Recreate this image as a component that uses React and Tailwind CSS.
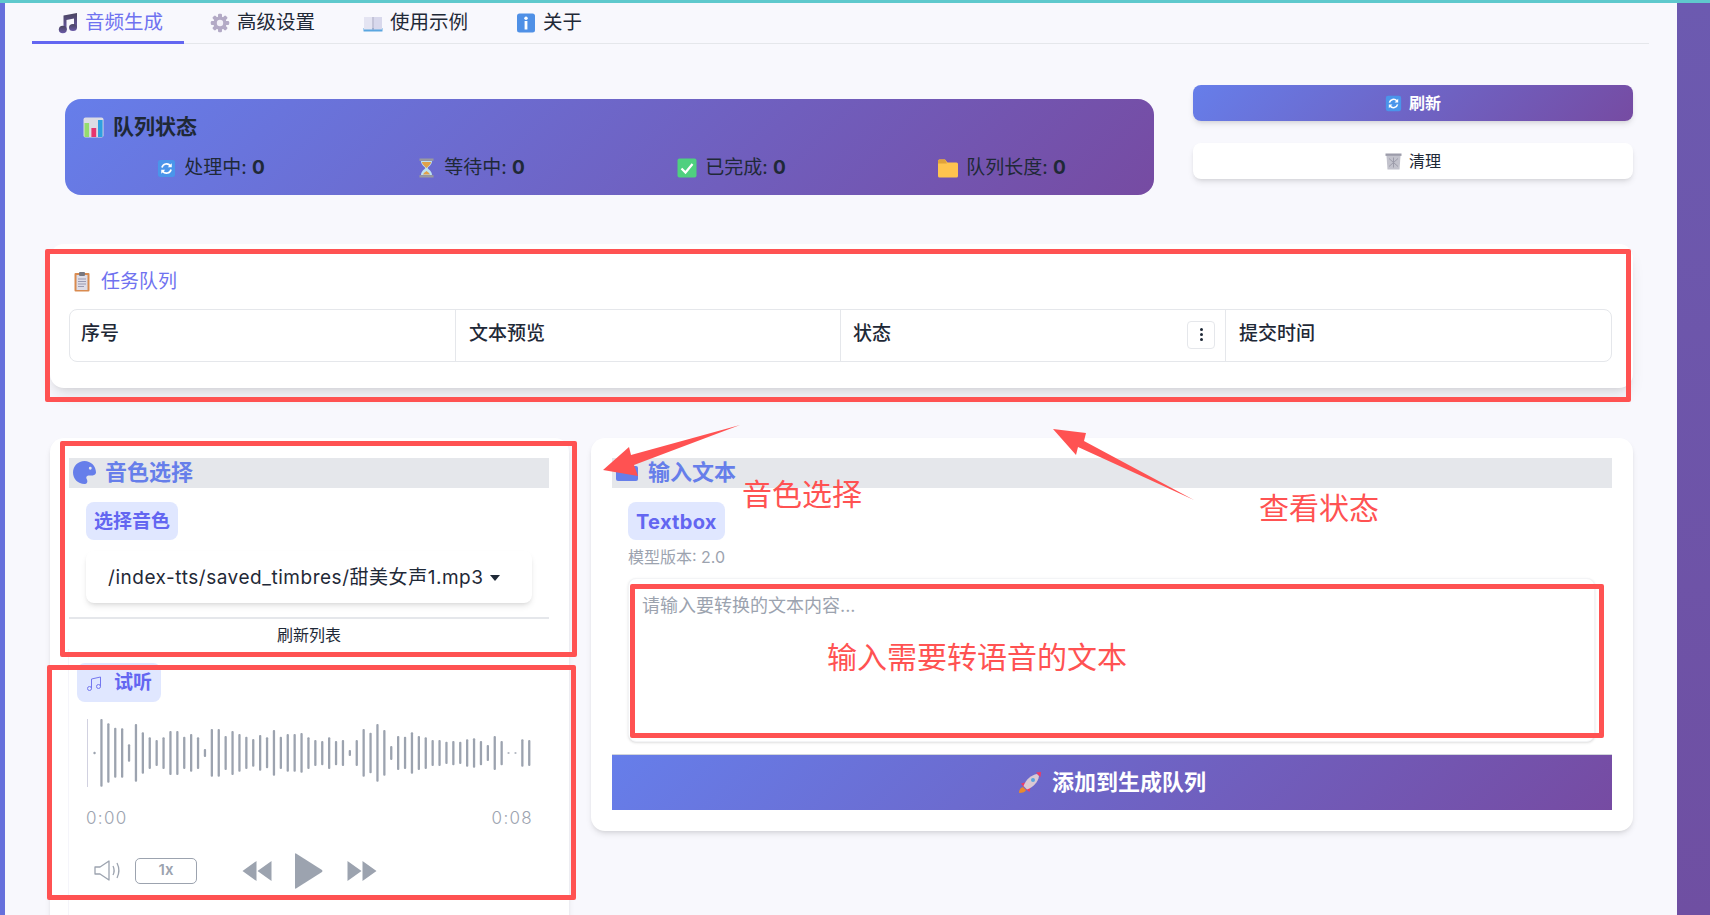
import React from "react"

const sans = "font-['Inter','Noto_Sans_CJK_SC',sans-serif]"

const wave = [
  [275,283],[177,380],[190,368],[203,353],[205,353],[253,305],[192,365],[217,341],[232,327],[240,318],[232,327],
  [213,345],[213,345],[230,327],[222,335],[232,327],[267,291],[207,350],[207,350],[228,330],[213,345],[222,335],
  [230,327],[237,320],[225,332],[232,325],[210,347],[230,327],[222,335],[222,335],[219,338],[232,327],[240,318],
  [243,316],[232,327],[243,316],[240,318],[270,288],[240,318],[207,350],[218,340],[192,365],[210,347],[258,300],
  [228,330],[230,327],[217,341],[228,330],[232,327],[240,318],[240,318],[245,312],[243,316],[245,312],[238,320],
  [235,323],[243,316],[255,303],[228,330],[243,316],[277,281],[277,281],[238,320],[240,318],
]

function NoteIcon() {
  return (
    <svg width="20" height="22" viewBox="0 0 20 22">
      <defs>
        <linearGradient id="noteg" x1="0" y1="0" x2="0" y2="1">
          <stop offset="0" stopColor="#4a4560" />
          <stop offset="1" stopColor="#6a5aa8" />
        </linearGradient>
      </defs>
      <path d="M5.500 3.500 19 1v15h-3V6.500L8.500 8v10h-3z" fill="url(#noteg)" />
      <ellipse cx="4.800" cy="17.500" rx="4" ry="3.800" fill="url(#noteg)" />
      <ellipse cx="15" cy="15.500" rx="4" ry="3.600" fill="url(#noteg)" />
    </svg>
  )
}

function GearIcon() {
  return (
    <svg width="20" height="20" viewBox="0 0 20 20">
      <g fill="#b3aac6">
        <circle cx="10" cy="10" r="6.600" />
        <rect x="8" y="0.800" width="4" height="18.400" rx="1.200" />
        <rect x="8" y="0.800" width="4" height="18.400" rx="1.200" transform="rotate(45 10 10)" />
        <rect x="8" y="0.800" width="4" height="18.400" rx="1.200" transform="rotate(90 10 10)" />
        <rect x="8" y="0.800" width="4" height="18.400" rx="1.200" transform="rotate(135 10 10)" />
      </g>
      <circle cx="10" cy="10" r="3.200" fill="#f2f0f8" />
    </svg>
  )
}

function BookIcon() {
  return (
    <svg width="20" height="20" viewBox="0 0 20 20">
      <rect x="0.500" y="15" width="19" height="3.500" rx="0.600" fill="#5aa6e0" />
      <path d="M1 4h8.400v12.500H1z" fill="#e4e4f2" />
      <path d="M10.600 4H19v12.500h-8.400z" fill="#d8d8ec" />
      <rect x="9.400" y="4" width="1.200" height="13" fill="#a9a9c4" />
    </svg>
  )
}

function InfoIcon() {
  return (
    <svg width="20" height="20" viewBox="0 0 20 20">
      <rect x="1" y="0.500" width="18" height="19" rx="2.500" fill="#4f90e6" />
      <circle cx="10" cy="5.200" r="1.700" fill="#fff" />
      <rect x="8.600" y="8" width="2.800" height="8.500" fill="#fff" />
    </svg>
  )
}

function ChartIcon() {
  return (
    <svg width="21" height="21" viewBox="0 0 21 21">
      <rect x="0.500" y="0.500" width="20" height="20" rx="2" fill="#dcdce4" />
      <rect x="1.500" y="6" width="4.600" height="14" fill="#94dc6e" />
      <rect x="8.400" y="11" width="4.800" height="9" fill="#e6356f" />
      <rect x="15" y="3" width="4.600" height="17" fill="#2f9fe0" />
    </svg>
  )
}

function RefreshIcon({ w = 19, h = 19 }) {
  return (
    <svg width={w} height={h} viewBox="0 0 20 20">
      <rect x="1" y="1" width="18" height="18" rx="2.500" fill="#4a95ea" />
      <path d="M5.200 9A5 5 0 0 1 14 7" fill="none" stroke="#fff" strokeWidth="1.800" />
      <path d="M15.500 4.500v4.200h-4.200z" fill="#fff" />
      <path d="M14.800 11A5 5 0 0 1 6 13" fill="none" stroke="#fff" strokeWidth="1.800" />
      <path d="M4.500 15.500v-4.200h4.200z" fill="#fff" />
    </svg>
  )
}

function HourglassIcon() {
  return (
    <svg width="19" height="20" viewBox="0 0 19 20">
      <rect x="2.500" y="0.500" width="14" height="2.400" fill="#9a9a9e" />
      <rect x="2.500" y="17.100" width="14" height="2.400" fill="#9a9a9e" />
      <path d="M4 3h11c0 4-3.600 5.400-4.400 7 .8 1.600 4.400 3 4.400 7H4c0-4 3.600-5.400 4.400-7C7.600 8.400 4 7 4 3z" fill="#bde2f2" />
      <path d="M4.800 4h9.400c-.5 3-3.600 4.600-4.700 6C8.400 8.600 5.300 7 4.800 4z" fill="#e0a14a" />
      <path d="M6 16.600c.5-1.800 2.400-2.600 3.500-3.600 1.100 1 3 1.800 3.500 3.600z" fill="#e0a14a" />
    </svg>
  )
}

function CheckIcon() {
  return (
    <svg width="20" height="20" viewBox="0 0 20 20">
      <rect x="0.500" y="0.500" width="19" height="19" rx="2" fill="#4fd07f" />
      <path d="M4.500 10.500 8.500 14.500 15.500 6" fill="none" stroke="#fff" strokeWidth="2.200" />
    </svg>
  )
}

function FolderIcon() {
  return (
    <svg width="20" height="19" viewBox="0 0 20 19">
      <path d="M0 2a1.500 1.500 0 0 1 1.500-1.500H7L9.500 3.500h9A1.500 1.500 0 0 1 20 5v12a1.500 1.500 0 0 1-1.500 1.500h-17A1.500 1.500 0 0 1 0 17z" fill="#ffc44f" />
      <path d="M0 2a1.500 1.500 0 0 1 1.500-1.500H7L9 4.500H0z" fill="#e0a23a" />
    </svg>
  )
}

function TrashIcon() {
  return (
    <svg width="17" height="17" viewBox="0 0 17 17">
      <rect x="0.500" y="0.500" width="16" height="2.400" fill="#9c9caa" />
      <path d="M1.500 3h14l-1 13.500h-12z" fill="#c2c2cc" />
      <path d="M4 5.500l9 8M13 5.500l-9 8M8.500 4.500v10" stroke="#9c9caa" strokeWidth="1" />
    </svg>
  )
}

function ClipboardIcon() {
  return (
    <svg width="16" height="20" viewBox="0 0 16 20">
      <rect x="0.500" y="1" width="15" height="18.500" rx="1" fill="#d98b50" />
      <rect x="2.500" y="3" width="11" height="15" fill="#dedde8" />
      <rect x="5" y="0" width="6" height="4" rx="1" fill="#77777f" />
      <path d="M4 7h8M4 9.500h8M4 12h8M4 14.500h6" stroke="#9a9ab2" strokeWidth="1" />
    </svg>
  )
}

function RocketIcon() {
  return (
    <svg width="24" height="24" viewBox="0 0 24 24">
      <path d="M1 22c0-3 1.500-5.500 4-6l3 3c-.5 2-3 3-7 3z" fill="#e98a2c" />
      <path d="M3 12.500l4-1-1 5zM11.500 21l1-4.500-5 1.500z" fill="#f03a62" />
      <path d="M5.500 15C8 8.500 13 4 19 3l2 2c-.8 6-5.500 11-12 13.500z" fill="#d9c9d4" />
      <path d="M18 1.500 23 1l-.5 5z" fill="#f03a62" />
      <circle cx="15" cy="9" r="2" fill="#5aa6e0" />
    </svg>
  )
}

function PaletteIcon() {
  return (
    <svg width="23" height="23" viewBox="0 0 512 512">
      <path
        fill="#667eea"
        d="M512 256c0 .9 0 1.800 0 2.700-.4 36.500-33.600 61.300-70.100 61.300H344c-26.500 0-48 21.500-48 48 0 3.400.4 6.700 1 9.900 2.100 10.200 6.500 20 10.800 29.900 6.100 13.800 12.100 27.500 12.100 42 0 31.800-21.600 60.700-53.400 62-3.500.1-7 .2-10.600.2C114.600 512 0 397.400 0 256S114.600 0 256 0s256 114.600 256 256zm-128-64a32 32 0 1 0 0-64 32 32 0 1 0 0 64z"
      />
    </svg>
  )
}

function Tab({ icon, label, active, className }) {
  return (
    <div
      className={`flex items-center gap-[7px] h-[41px] pt-[2px] border-b-[3px] ${active ? "border-[#6366f1] text-[#6f72f0]" : "border-transparent text-[#1f2937]"} ${className}`}
    >
      {icon}
      <span className="text-[19.500px]">{label}</span>
    </div>
  )
}

function Stat({ icon, label }) {
  return (
    <div className="flex items-center gap-[8px] text-[19px] text-[#1f2937]">
      {icon}
      <span>
        {label}: <b className="font-bold">0</b>
      </span>
    </div>
  )
}

function Chip({ children, className }) {
  return (
    <div className={`inline-flex items-center rounded-lg bg-[#e0e7ff] h-[38px] pt-[2px] text-[#6366f1] font-bold ${className}`}>
      {children}
    </div>
  )
}

function SectionHead({ icon, label, className }) {
  return (
    <div className={`flex items-center h-[30px] pb-[2px] bg-[#e5e7eb] text-[22px] font-bold text-[#667eea] ${className}`}>
      {icon}
      <span>{label}</span>
    </div>
  )
}

function Th({ label, children, className }) {
  return (
    <div className={`flex items-center justify-between pb-[2px] border-[#e5e7eb] text-[19px] font-medium text-[#1f2937] ${className}`}>
      <span>{label}</span>
      {children}
    </div>
  )
}

export default function App() {
  return (
    <div className={`relative w-[1710px] h-[915px] overflow-hidden bg-[#f8f8fd] ${sans}`}>
      <div className="h-[3px] bg-[#5fc9cd]" />
      <div className="flex h-[912px]">
        <div className="w-[5px] bg-[#6670dc]" />

        <div className="w-[1672px] shrink-0">
          {/* tabs */}
          <div className="ml-[27px] w-[1617px] flex border-b border-[#e5e7eb] h-[41px]">
            <Tab icon={<NoteIcon />} label="音频生成" active className="pl-[26px] pr-[21px]" />
            <Tab icon={<GearIcon />} label="高级设置" className="ml-[2px] px-[24px]" />
            <Tab icon={<BookIcon />} label="使用示例" className="px-[24px]" />
            <Tab icon={<InfoIcon />} label="关于" className="px-[24px]" />
          </div>

          <div className="pl-[45px] w-[1628px]">
            {/* status row */}
            <div className="flex items-start pl-[15px] pt-[41px]">
              <div className="mt-[14px] w-[1089px] h-[96px] rounded-2xl bg-[linear-gradient(135deg,#667eea,#764ba2)] pt-[17px] pl-[16px] pr-[12px]">
                <div className="flex items-center gap-[9px] h-[22px] pl-[2px] text-[21px] font-bold text-[#1f2937]">
                  <ChartIcon />
                  <span>队列状态</span>
                </div>
                <div className="flex justify-around mt-[16px]">
                  <Stat icon={<RefreshIcon />} label="处理中" />
                  <Stat icon={<HourglassIcon />} label="等待中" />
                  <Stat icon={<CheckIcon />} label="已完成" />
                  <Stat icon={<FolderIcon />} label="队列长度" />
                </div>
              </div>
              <div className="ml-[39px] w-[440px] flex flex-col gap-[22px]">
                <div className="flex items-center justify-center gap-[7px] h-[36px] rounded-lg bg-[linear-gradient(135deg,#667eea,#764ba2)] text-[16px] font-bold text-white shadow-md">
                  <RefreshIcon w={17} h={17} />
                  刷新
                </div>
                <div className="flex items-center justify-center gap-[7px] h-[36px] rounded-lg bg-white text-[16px] text-[#1f2937] shadow-md">
                  <TrashIcon />
                  清理
                </div>
              </div>
            </div>

            {/* task queue */}
            <div className="mt-[49px] w-[1583px] h-[144px] rounded-[14px] bg-white shadow-lg pt-[25px] px-[20px]">
              <div className="flex items-center gap-[11px] h-[26px] pl-[4px] text-[19px] text-[#6f72f0]">
                <ClipboardIcon />
                <span>任务队列</span>
              </div>
              <div className="mt-[14px] -ml-[1px] w-[1543px] h-[53px] grid grid-cols-[386px_385px_385px_385px] rounded-lg border border-[#e5e7eb]">
                <Th label="序号" className="pl-[11px] border-r" />
                <Th label="文本预览" className="pl-[13px] border-r" />
                <Th label="状态" className="pl-[12px] pr-[10px] border-r">
                  <div className="flex flex-col items-center justify-center gap-[2px] w-[28px] h-[28px] rounded border border-[#e5e7eb]">
                    <i className="w-[3px] h-[3px] rounded-full bg-[#1f2937]" />
                    <i className="w-[3px] h-[3px] rounded-full bg-[#1f2937]" />
                    <i className="w-[3px] h-[3px] rounded-full bg-[#1f2937]" />
                  </div>
                </Th>
                <Th label="提交时间" className="pl-[13px]" />
              </div>
            </div>

            {/* two columns */}
            <div className="flex mt-[50px] gap-[22px]">
              <div className="w-[519px] h-[500px] shrink-0 rounded-t-[14px] bg-white shadow-md pt-[20px] pl-[19px] pr-[20px]">
                <SectionHead icon={<PaletteIcon />} label="音色选择" className="pl-[4px] gap-[9px]" />
                <Chip className="mt-[14px] ml-[17px] px-[8px] text-[19px]">选择音色</Chip>
                <div className="mt-[11px] ml-[17px] w-[446px] h-[52px] flex items-center rounded-lg bg-white shadow-md pl-[22px] pt-[2px] text-[19px] tracking-[0.530px] text-[#1f2937]">
                  <span>/index-tts/saved_timbres/甜美女声1.mp3</span>
                  <svg className="ml-[6px]" width="10" height="6" viewBox="0 0 10 6">
                    <path d="M0 0h10L5 6z" fill="#1f2937" />
                  </svg>
                </div>
                <div className="mt-[14px] border-t-2 border-[#e5e7eb] h-[34px] flex items-center justify-center text-[16px] text-[#1f2937]">
                  刷新列表
                </div>

                <div className="-ml-[1px] w-[469px] h-[280px] border-l border-[#f5f5fa] -mt-[2px] pt-[14px] pl-[8px]">
                  <Chip className="px-[9px] gap-[12px] text-[19px] h-[39px]">
                    <svg width="16" height="16" viewBox="0 0 16 16" fill="none" stroke="#7477f0" strokeWidth="1">
                      <path d="M5.500 12.500V3l9-2v9.500" />
                      <circle cx="3.500" cy="12.500" r="2" />
                      <circle cx="12.500" cy="10.500" r="2" />
                    </svg>
                    试听
                  </Chip>
                  <svg className="mt-[17px] ml-[10px] block" width="446" height="68" viewBox="0 0 446 68">
                    <rect x="0" y="0" width="1" height="68" fill="#d1d1e0" />
                    {wave.map((b, i) => {
                      const top = (b[0] - 177) / 3
                      const h = (b[1] - b[0]) / 3
                      return <rect key={i} x={6.400 + i * 6.900} y={top} width="2.300" height={h} rx="1" fill="#9ca3af" />
                    })}
                  </svg>
                  <div className="mt-[19px] ml-[9px] w-[447px] flex justify-between text-[17px] tracking-[1.300px] font-light text-[#9ca3af]">
                    <span>0:00</span>
                    <span>0:08</span>
                  </div>
                  <div className="mt-[21px] ml-[17px] flex items-center">
                    <svg width="28" height="21" viewBox="0 0 28 21" fill="none" stroke="#9ca3af" strokeWidth="1.300">
                      <path d="M1 7h5l9-6v19l-9-6H1z" strokeLinejoin="round" />
                      <path d="M19 6c1.500 3 1.500 6 0 9M23 3c2.500 5 2.500 10 0 15" />
                    </svg>
                    <div className="ml-[13px] flex items-center justify-center w-[62px] h-[26px] rounded-[5px] border border-[#9ca3af] text-[15px] font-semibold text-[#9ca3af]">
                      1x
                    </div>
                    <svg className="ml-[45px]" width="30" height="20" viewBox="0 0 29 20" fill="#9ca3af">
                      <path d="M0 10 14 0v20zM15 10 29 0v20z" />
                    </svg>
                    <svg className="ml-[23px]" width="28" height="36" viewBox="0 0 28 36" fill="#9ca3af">
                      <path d="M0 1q0-1 1-.500L27 17q1 1 0 2L1 35.500q-1 .500-1-.500z" />
                    </svg>
                    <svg className="ml-[24px]" width="30" height="20" viewBox="0 0 29 20" fill="#9ca3af">
                      <path d="M0 0l14 10L0 20zM15 0l14 10-14 10z" />
                    </svg>
                  </div>
                </div>
              </div>

              <div className="w-[1042px] h-[393px] rounded-[14px] bg-white shadow-md pt-[20px] px-[21px]">
                <SectionHead
                  icon={
                    <svg width="22" height="18" viewBox="0 0 22 18">
                      <rect y="3" width="22" height="15" rx="2" fill="#667eea" />
                    </svg>
                  }
                  label="输入文本"
                  className="pl-[4px] gap-[10px]"
                />
                <Chip className="mt-[14px] ml-[16px] px-[8px] text-[20px] tracking-[0.300px]">Textbox</Chip>
                <div className="ml-[16px] mt-[8px] h-[18px] flex items-center text-[16px] text-[#9ca3af]">模型版本: 2.0</div>
                <div className="mt-[12px] ml-[16px] w-[967px] h-[164px] rounded-lg bg-white shadow-sm border border-[#f3f4f6] pl-[13px] pt-[15px]">
                  <textarea
                    rows="3"
                    placeholder="请输入要转换的文本内容..."
                    className="block w-full resize-none outline-none text-[18px] leading-[24px] placeholder:text-[#9ca3af]"
                  />
                </div>
                <div className="mt-[12px] h-[56px] border-t border-[#d1d5db] flex items-center justify-center gap-[10px] bg-[linear-gradient(135deg,#667eea,#764ba2)] text-[22px] font-bold text-white">
                  <RocketIcon />
                  添加到生成队列
                </div>
              </div>
            </div>
          </div>
        </div>

        <div className="flex-1 bg-[linear-gradient(180deg,#6c5ab0,#6f4fa2)]" />
      </div>

      {/* red annotations drawn on top of the screenshot */}
      <div className="absolute left-[45px] top-[249px] w-[1586px] h-[153px] rounded-[2px] border-[5px] border-[#ff5252]" />
      <div className="absolute left-[60px] top-[441px] w-[517px] h-[216px] rounded-[2px] border-[5px] border-[#ff5252]" />
      <div className="absolute left-[47px] top-[665px] w-[529px] h-[235px] rounded-[2px] border-[5px] border-[#ff5252]" />
      <div className="absolute left-[630px] top-[584px] w-[974px] h-[154px] rounded-[2px] border-[5px] border-[#ff5252]" />

      <span className="absolute left-[742px] top-[474px] text-[30px] leading-[40px] text-[#ff5252]">音色选择</span>
      <span className="absolute left-[1259px] top-[488px] text-[30px] leading-[40px] text-[#ff5252]">查看状态</span>
      <span className="absolute left-[827px] top-[637px] text-[30px] leading-[40px] text-[#ff5252]">输入需要转语音的文本</span>

      <svg className="absolute left-0 top-0 pointer-events-none" width="1710" height="915">
        <path d="M740 425 631 455 629 447 603 470 638 476 634 465z" fill="#ff5252" />
        <path d="M1194 500 1084 441 1086 433 1053 429 1076 455 1078 447z" fill="#ff5252" />
      </svg>
    </div>
  )
}
